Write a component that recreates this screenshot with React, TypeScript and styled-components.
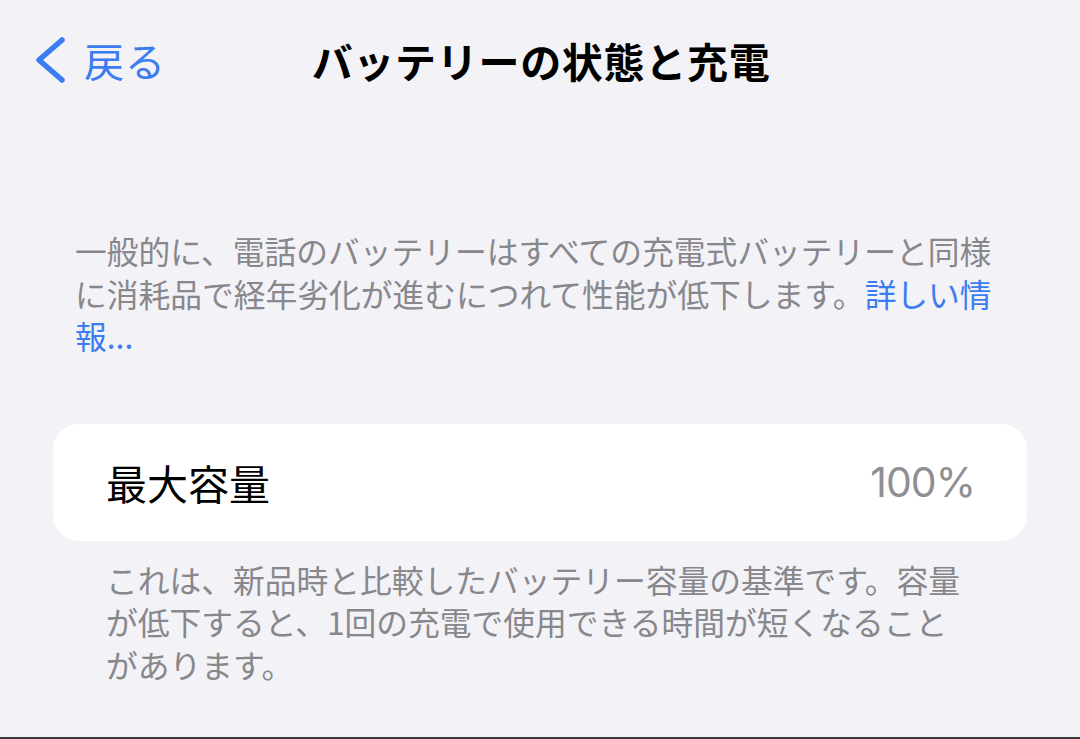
import styled, { createGlobalStyle } from "styled-components";

const GlobalStyle = createGlobalStyle`
  html, body {
    margin: 0;
    padding: 0;
    background: #f2f2f7;
  }
  body {
    font-family: "Noto Sans CJK JP", "Noto Sans", "Liberation Sans", sans-serif;
  }
`;

const Screen = styled.div`
  width: 1080px;
  height: 739px;
  display: flex;
  flex-direction: column;
  background: #f2f2f7;
  overflow: hidden;
`;

const NavBar = styled.div`
  position: relative;
  height: 120px;
  display: flex;
  align-items: center;
  justify-content: center;
`;

const BackButton = styled.div`
  position: absolute;
  left: 34px;
  top: 0;
  bottom: 0;
  display: flex;
  align-items: center;
  gap: 18px;
  color: #3b7cf0;
  font-size: 40px;
  letter-spacing: 1px;
`;

const Title = styled.h1`
  margin: 0 0 0 2px;
  font-size: 41px;
  font-weight: 700;
  color: #000;
  letter-spacing: 0.7px;
`;

const Note = styled.p<{ $indent: number }>`
  margin: 0;
  padding-left: ${(p) => p.$indent}px;
  font-size: 31.75px;
  line-height: 42.5px;
  color: #87878c;
  white-space: nowrap;
`;

const Link = styled.span`
  color: #3b7cf0;
`;

const Intro = styled.div`
  margin-top: 109px;
`;

const Card = styled.div`
  margin: 67px 53px 17px;
  height: 117px;
  background: #fff;
  border-radius: 26px;
  display: flex;
  align-items: center;
  justify-content: space-between;
  padding: 0 52px 0 53px;
`;

const Label = styled.span`
  font-size: 41px;
  color: #000;
`;

const Value = styled.span`
  font-family: "Inter", "Noto Sans", sans-serif;
  font-size: 41px;
  letter-spacing: -1px;
  color: #8e8e93;
`;

const Spacer = styled.div`
  flex: 1;
`;

const BottomEdge = styled.div`
  height: 2px;
  background: #3a3a3c;
`;

export default function App() {
  return (
    <>
      <GlobalStyle />
      <Screen>
        <NavBar>
          <BackButton>
            <svg width="32" height="48" viewBox="0 0 32 48">
              <path
                d="M28 4 L5 24 L28 44"
                fill="none"
                stroke="#3b7cf0"
                strokeWidth="5.5"
                strokeLinecap="round"
                strokeLinejoin="round"
              />
            </svg>
            <span>戻る</span>
          </BackButton>
          <Title>バッテリーの状態と充電</Title>
        </NavBar>
        <Intro>
          <Note $indent={75}>
            一般的に、電話のバッテリーはすべての充電式バッテリーと同様
            <br />
            に消耗品で経年劣化が進むにつれて性能が低下します。<Link>詳しい情</Link>
            <br />
            <Link>報...</Link>
          </Note>
        </Intro>
        <Card>
          <Label>最大容量</Label>
          <Value>100%</Value>
        </Card>
        <Note $indent={106}>
          これは、新品時と比較したバッテリー容量の基準です。容量
          <br />
          が低下すると、1回の充電で使用できる時間が短くなること
          <br />
          があります。
        </Note>
        <Spacer />
        <BottomEdge />
      </Screen>
    </>
  );
}
